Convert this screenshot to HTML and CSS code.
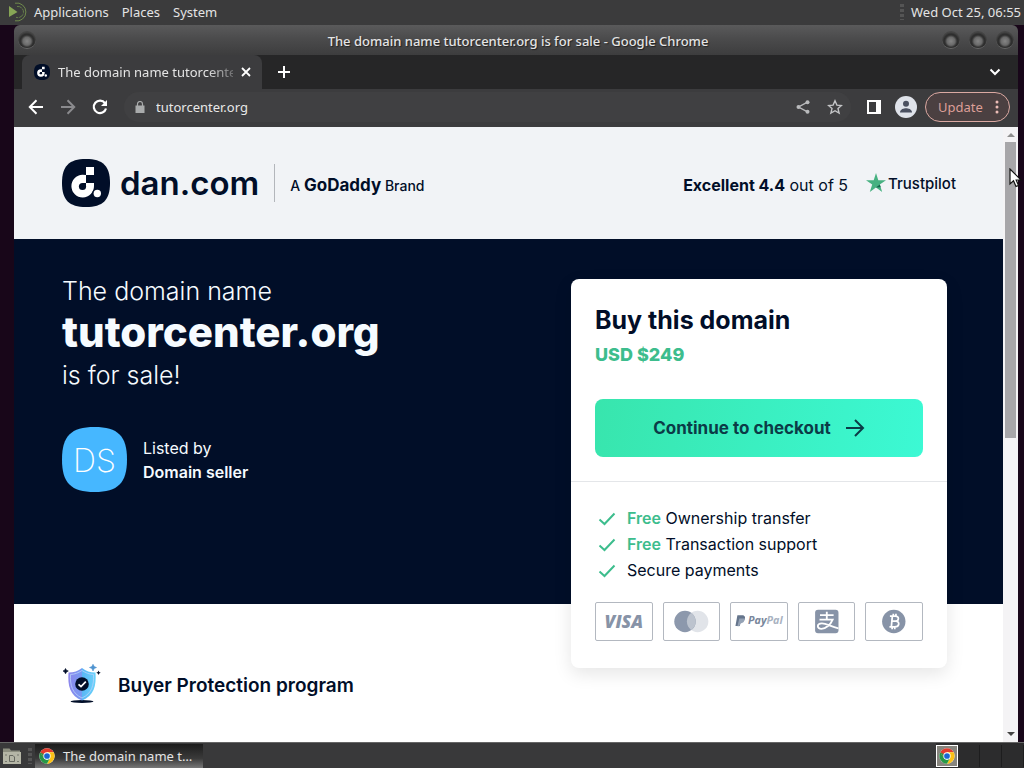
FILE: index.html
```
<!DOCTYPE html>
<html lang="en">
<head>
<meta charset="utf-8">
<title>The domain name tutorcenter.org is for sale</title>
<link rel="stylesheet" href="styles.css">
</head>
<body>
<svg class="defs" aria-hidden="true">
  <defs>
    <symbol id="chrome" viewBox="0 0 48 48">
      <circle cx="24" cy="24" r="23" fill="#fff"/>
      <path d="M24 24 4.1 12.5A23 23 0 0 1 43.9 12.5H24Z" fill="#e33b2e"/>
      <path d="M24 13H43.9A23 23 0 0 1 24 47L33.5 29.5Z" fill="#fbc116"/>
      <path d="M4.1 12.5 14.5 29.5 24 35 33.5 29.5 24 47A23 23 0 0 1 4.1 12.5Z" fill="#279847"/>
      <path d="M4.1 12.5 24 12.5 14.5 29.5Z" fill="#e33b2e"/>
      <path d="M4.1 12.5 14.5 29.5 24 24Z" fill="#279847"/>
      <circle cx="24" cy="24" r="11" fill="#fff"/>
      <circle cx="24" cy="24" r="8.6" fill="#1a66d2"/>
    </symbol>
    <symbol id="dan" viewBox="0 0 48 48">
      <path d="M24 0C41 0 48 7 48 24S41 48 24 48 0 41 0 24 7 0 24 0Z" fill="#010e28"/>
      <path d="M24 8h8v8h-8z" fill="#fff"/>
      <path d="M24 16V24H32V27A11.300 11.300 0 1 1 20.500 15.800Z" fill="#fff"/>
      <circle cx="20.500" cy="27.500" r="3.600" fill="#010e28"/>
      <path d="M20.500 23.900H24V27.500H20.500Z" fill="#010e28"/>
      <circle cx="35" cy="34.500" r="4.800" fill="#010e28"/>
      <circle cx="35.300" cy="34.500" r="3.700" fill="#fff"/>
    </symbol>
    <symbol id="check" viewBox="0 0 24 24">
      <path d="M4.500 13.500 9.500 18 19.500 7.500" fill="none" stroke="#3dbd8d" stroke-width="2"/>
    </symbol>
  </defs>
</svg>

<header class="panel">
  <svg class="mate" viewBox="0 0 22 22" aria-hidden="true">
    <path d="M3 5 11.500 11 3 16Z" fill="#87a556"/>
    <path d="M9 2.200A9 9 0 1 1 9 19.800" fill="none" stroke="#6f8a4c" stroke-width="1"/>
    <path d="M11 5.500A5.600 5.600 0 1 1 10 16.300" fill="none" stroke="#66804a" stroke-width="1" stroke-dasharray="5 1"/>
  </svg>
  <nav class="menus">
    <button>Applications</button>
    <button>Places</button>
    <button>System</button>
  </nav>
  <span class="grip"></span>
  <time class="clock">Wed Oct 25, 06:55</time>
</header>

<main class="desktop">
  <section class="window">
    <div class="titlebar">
      <button class="knob" aria-label="Window menu"></button>
      <span class="title">The domain name tutorcenter.org is for sale - Google Chrome</span>
      <div class="knobs">
        <button class="knob" aria-label="Minimize"></button>
        <button class="knob" aria-label="Maximize"></button>
        <button class="knob" aria-label="Close"></button>
      </div>
    </div>

    <div class="tabs">
      <div class="tab">
        <svg class="icon16" aria-hidden="true"><use href="#dan"/></svg>
        <span class="tab-title">The domain name tutorcenter</span>
        <button class="bare" aria-label="Close tab"><svg class="icon10" viewBox="0 0 10 10"><path d="M1 1 9 9M9 1 1 9" stroke="#fff" stroke-width="1.800"/></svg></button>
      </div>
      <button class="bare" aria-label="New tab"><svg class="icon12" viewBox="0 0 12 12"><path d="M6 0V12M0 6H12" stroke="#fff" stroke-width="2"/></svg></button>
      <button class="bare chevron" aria-label="Search tabs"><svg class="icon12" viewBox="0 0 12 12"><path d="M1.500 3.500 6 8 10.500 3.500" fill="none" stroke="#fff" stroke-width="2"/></svg></button>
    </div>

    <div class="toolbar">
      <button class="bare" aria-label="Back"><svg class="icon16" viewBox="0 0 16 16"><path d="M15 8H2M8.500 1.300 1.800 8 8.500 14.700" fill="none" stroke="#fff" stroke-width="2"/></svg></button>
      <button class="bare" aria-label="Forward"><svg class="icon16" viewBox="0 0 16 16"><path d="M1 8H14M7.500 1.300 14.200 8 7.500 14.700" fill="none" stroke="#8b8b8e" stroke-width="2"/></svg></button>
      <button class="bare" aria-label="Reload"><svg class="icon16" viewBox="0 0 16 16"><path d="M13 4.200A6.200 6.200 0 1 0 14 9.500" fill="none" stroke="#fff" stroke-width="2.200"/><path d="M15 1V7H9Z" fill="#fff"/></svg></button>
      <div class="omnibox">
        <svg class="icon12" viewBox="0 0 12 12" aria-hidden="true"><path d="M1.500 4.500h9v7.500h-9z" fill="#a9abac"/><path d="M3.500 5V3a2.500 2.500 0 0 1 5 0V5" fill="none" stroke="#a9abac" stroke-width="1.200"/></svg>
        <input class="url" aria-label="Address" value="tutorcenter.org">
        <button class="bare" aria-label="Share"><svg class="icon16" viewBox="0 0 16 16"><path d="M12.500 3.200 3.500 8 12.500 12.800" fill="none" stroke="#b9babc" stroke-width="1.400"/><g fill="#b9babc"><circle cx="12.500" cy="3.200" r="2"/><circle cx="3.500" cy="8" r="2"/><circle cx="12.500" cy="12.800" r="2"/></g></svg></button>
        <button class="bare" aria-label="Bookmark"><svg class="icon16" viewBox="0 0 16 16"><path d="M8 1.800 9.900 6.100 14.500 6.500 11 9.600 12.100 14.100 8 11.700 3.900 14.100 5 9.600 1.500 6.500 6.100 6.100Z" fill="none" stroke="#c3c4c6" stroke-width="1.400"/></svg></button>
      </div>
      <button class="bare" aria-label="Side panel"><svg class="icon14" viewBox="0 0 14 14"><path d="M0 0H14V14H0ZM2 2V12H9V2Z" fill="#fff" fill-rule="evenodd"/></svg></button>
      <button class="bare" aria-label="Profile"><svg class="icon22" viewBox="0 0 22 22"><circle cx="11" cy="11" r="11" fill="#dfe3ea"/><circle cx="11" cy="7.800" r="3" fill="#4a5060"/><path d="M5 16.500C5 13 9 12.200 11 12.200S17 13 17 16.500Z" fill="#4a5060"/></svg></button>
      <button class="update">Update
        <svg class="dots" viewBox="0 0 4 14" aria-hidden="true"><g fill="#ecbdb7"><circle cx="2" cy="2" r="1.500"/><circle cx="2" cy="7" r="1.500"/><circle cx="2" cy="12" r="1.500"/></g></svg>
      </button>
    </div>

    <div class="viewport">
      <article class="page">
        <header class="site-head">
          <a class="brand" href="#">
            <svg class="icon48" aria-hidden="true"><use href="#dan"/></svg>
            <span class="brand-name">dan.com</span>
          </a>
          <span class="rule"></span>
          <span class="owner">A <b>GoDaddy</b> Brand</span>
          <span class="rating"><b>Excellent 4.4</b> out of 5</span>
          <a class="trust" href="#"><svg class="icon20" viewBox="0 0 20 20" aria-hidden="true"><path d="M10 0 12.300 7.200H20L13.800 11.600 16.200 19 10 14.400 3.800 19 6.200 11.600 0 7.200H7.700Z" fill="#47b181"/><path d="M10 14.400 13.800 11.600 14.700 14.200Z" fill="#17644d"/></svg>Trustpilot</a>
        </header>

        <section class="hero">
          <div class="intro">
            <h1 class="headline">The domain name <strong>tutorcenter.org</strong> is for sale!</h1>
            <div class="seller">
              <svg class="avatar" viewBox="0 0 65 65" aria-hidden="true"><path d="M32.500 0C56 0 65 9 65 32.500S56 65 32.500 65 0 56 0 32.500 9 0 32.500 0Z" fill="#46b7ff"/><text x="32.500" y="45" class="initials">DS</text></svg>
              <p class="seller-text">Listed by<br><b>Domain seller</b></p>
            </div>
          </div>

          <aside class="card">
            <div class="offer">
              <h2 class="offer-title">Buy this domain</h2>
              <p class="price">USD $249</p>
              <button class="checkout">Continue to checkout
                <svg class="icon20" viewBox="0 0 20 20" aria-hidden="true"><path d="M1 10H18M10 2 18 10 10 18" fill="none" stroke="#0b3b47" stroke-width="2"/></svg>
              </button>
            </div>
            <div class="perks">
              <ul class="perk-list">
                <li><svg class="icon24" aria-hidden="true"><use href="#check"/></svg><span><b>Free</b> Ownership transfer</span></li>
                <li><svg class="icon24" aria-hidden="true"><use href="#check"/></svg><span><b>Free</b> Transaction support</span></li>
                <li><svg class="icon24" aria-hidden="true"><use href="#check"/></svg><span>Secure payments</span></li>
              </ul>
              <div class="payments">
                <svg class="pay" viewBox="0 0 56 38" role="img" aria-label="Visa"><text x="28" y="26" class="visa">VISA</text></svg>
                <svg class="pay" viewBox="0 0 56 38" role="img" aria-label="Mastercard"><circle cx="34" cy="19" r="11" fill="#e1e4e9"/><circle cx="21" cy="19" r="11" fill="#8c98ac"/><path d="M27.500 10.100A11 11 0 0 1 27.500 27.900 11 11 0 0 1 27.500 10.100Z" fill="#bcc3ce"/></svg>
                <svg class="pay" viewBox="0 0 56 38" role="img" aria-label="PayPal"><path d="M6 12.500H11C14 12.500 14.500 15 13.200 17.500 12.500 19 11 19.500 9.500 19.500L8.500 23.500H4Z" fill="#65758c"/><path d="M8 16H13.500C13.500 19.500 11.500 21 9 21L8 24H6Z" fill="#94a2b5"/><text x="17" y="22" class="paypal">Pay<tspan class="pal">Pal</tspan></text></svg>
                <svg class="pay" viewBox="0 0 56 38" role="img" aria-label="Alipay"><rect x="16" y="7" width="24" height="24" rx="3" fill="#8793a7"/><path d="M21 12.500H35M28 9V17M20.500 17H34C32 22 27 26.500 22.500 26.500 17.500 26.500 17.500 21 23 21 28 21 32 24.500 40 26" fill="none" stroke="#fff" stroke-width="1.900"/></svg>
                <svg class="pay" viewBox="0 0 56 38" role="img" aria-label="Bitcoin"><circle cx="28" cy="19" r="12" fill="#8793a7"/><path d="M24 13.500H29.500C34 13.500 33.500 18.700 29.500 18.700H26 30C34.500 18.700 34 24.500 29 24.500H23.500M26.500 13.500 25.500 24.500M27.500 11V13.500M30.200 11V13.500M26.300 24.500V27M29 24.500V27" fill="none" stroke="#fff" stroke-width="1.800"/></svg>
              </div>
            </div>
          </aside>
        </section>

        <section class="protection">
          <svg class="shield" viewBox="0 0 40 40" aria-hidden="true">
            <defs><linearGradient id="shade" x1="0" y1="0" x2="1" y2="0"><stop offset="0" stop-color="#8d86ec"/><stop offset=".5" stop-color="#779bf2"/><stop offset=".5" stop-color="#59b7f5"/><stop offset="1" stop-color="#6bd3fa"/></linearGradient></defs>
            <ellipse cx="20" cy="37.500" rx="11.500" ry="1.500" fill="#010e28"/>
            <path d="M20 4C24 7 28 8.500 33.500 8.500 34.500 22 32 31.500 20 36.500 8 31.500 5.500 22 6.500 8.500 12 8.500 16 7 20 4Z" fill="url(#shade)"/>
            <path d="M20 6.500C24 9 27 10.200 31.500 10.500 32 21 30 29.500 20 34 10 29.500 8 21 8.500 10.500 13 10.200 16 9 20 6.500Z" fill="none" stroke="#b9d3fb" stroke-width=".8"/>
            <circle cx="20" cy="20" r="6.800" fill="#010e28"/>
            <path d="M16.500 20.300 19 22.500 23.800 17.700" fill="none" stroke="#fff" stroke-width="1.700"/>
            <path d="M3.500 4.500 4.500 6.300 6.300 7 4.500 7.900 3.500 9.800 2.600 7.900 1 7 2.600 6.300Z" fill="#010e28" stroke="#010e28" stroke-width=".6"/>
            <path d="M31 .3 32.200 2.600 34.500 3.500 32.200 4.500 31 7 29.900 4.500 27.500 3.500 29.900 2.600Z" fill="#4f94d0" stroke="#4f94d0" stroke-width=".6"/>
            <path d="M36.500 6.500 37.200 8 38.700 8.700 37.200 9.400 36.500 11 35.800 9.400 34.300 8.700 35.800 8Z" fill="#010e28"/>
          </svg>
          <h3 class="protection-title">Buyer Protection program</h3>
        </section>
      </article>
      <div class="scrollbar"><span class="up"></span><span class="thumb"></span><span class="down"></span></div>
    </div>
  </section>
</main>

<footer class="taskbar">
  <button class="bare files" aria-label="Files"><svg class="icon20" viewBox="0 0 20 20"><path d="M1 4V2.500H7.500L9 4.500H18V7H1Z" fill="#8d8f80"/><path d="M1 6H19V18H1Z" fill="#b5b6a6"/><path d="M7.500 9.500H11L12.500 11V15.500H7.500Z" fill="none" stroke="#66685f"/><path d="M3 9H5M15 9H17M3 15.500H5M15 15.500H17" stroke="#77796f"/></svg></button>
  <span class="grip"></span>
  <button class="task"><svg class="icon16" aria-hidden="true"><use href="#chrome"/></svg>The domain name t…</button>
  <div class="workspaces">
    <button class="space current" aria-label="Workspace 1"><svg class="icon16" aria-hidden="true"><use href="#chrome"/></svg></button>
    <button class="space" aria-label="Workspace 2"></button>
    <button class="space" aria-label="Workspace 3"></button>
    <button class="space" aria-label="Workspace 4"></button>
  </div>
</footer>

<svg class="cursor" viewBox="0 0 14 20" aria-hidden="true"><path d="M1 1V16L4.500 12.800 7 18.500 9.500 17.500 7.200 12H12Z" fill="#fff" stroke="#111" stroke-width="1.200"/></svg>
</body>
</html>
```

FILE: styles.css
```
* { box-sizing: border-box; }
body {
  margin: 0;
  height: 100vh;
  display: flex;
  flex-direction: column;
  overflow: hidden;
  background: #180619;
  font-family: "Noto Sans", sans-serif;
  font-size: 13px;
  color: #e4e4e4;
}
h1, h2, h3, p, ul { margin: 0; padding: 0; }
ul { list-style: none; }
button { font: inherit; color: inherit; border: 0; padding: 0; background: none; }
a { color: inherit; text-decoration: none; }
svg { display: block; flex: none; }
.defs { position: absolute; width: 0; height: 0; }
.bare { display: flex; align-items: center; justify-content: center; }
.icon10 { width: 10px; height: 10px; }
.icon12 { width: 12px; height: 12px; }
.icon14 { width: 14px; height: 14px; }
.icon16 { width: 16px; height: 16px; }
.icon20 { width: 20px; height: 20px; }
.icon22 { width: 22px; height: 22px; }
.icon24 { width: 24px; height: 24px; }
.icon48 { width: 48px; height: 48px; }

.panel { display: flex; align-items: center; flex: none; height: 25px; padding: 0 3px 2px 6px; background: #3b3b3c; }
.mate { width: 22px; height: 22px; margin-right: 6px; }
.menus { display: flex; gap: 13px; }
.grip { width: 4px; height: 16px; background: repeating-linear-gradient(#555 0 3px, #3b3b3c 3px 5px); }
.panel .grip { margin-left: auto; }
.clock { margin-left: 7px; }

.desktop { flex: 1; min-height: 0; padding: 0 6px 0 14px; display: flex; }
.window { flex: 1; min-width: 0; display: flex; flex-direction: column; border-radius: 6px 6px 0 0; overflow: hidden; }
.titlebar { display: flex; align-items: center; justify-content: space-between; flex: none; height: 30px; padding: 0 4px; background: linear-gradient(#5a5a5b, #4b4b4c 45%, #3d3d3e); }
.title { font-weight: 500; margin-left: 58px; padding-top: 2px; text-shadow: 1px 1px 1px #222; }
.knobs { display: flex; gap: 9px; }
.knob { width: 18px; height: 18px; border-radius: 50%; background: radial-gradient(circle at 50% 60%, #858585, #6a6a6a 4px, #333 6px, #2c2c2c 7px, #444 9px); border-bottom: 1px solid #666; }

.tabs { display: flex; align-items: center; flex: none; height: 34px; padding-right: 17px; background: #262627; }
.tab { display: flex; align-items: center; gap: 8px; width: 240px; height: 34px; margin: 0 16px 0 8px; padding: 0 11px 0 12px; border-radius: 8px 8px 0 0; background: #3c3c3e; }
.tab-title { flex: 1; min-width: 0; white-space: nowrap; -webkit-mask-image: linear-gradient(90deg, #000 85%, rgba(0, 0, 0, .3)); mask-image: linear-gradient(90deg, #000 85%, rgba(0, 0, 0, .3)); }
.chevron { margin-left: auto; }
.toolbar { display: flex; align-items: center; gap: 16px; flex: none; height: 38px; padding: 0 8px 2px 14px; background: #3c3c3e; }
.omnibox { display: flex; align-items: center; flex: 1; gap: 16px; height: 30px; padding: 0 8px 0 10px; border-radius: 15px; background: #404042; }
.url { flex: 1; min-width: 0; border: 0; padding: 0; margin-left: -6px; background: none; font: inherit; color: #e8e8e8; }
.update { display: flex; align-items: center; gap: 12px; height: 30px; width: 85px; padding: 0 12px; margin-left: -8px; border: 1px solid #dba9a2; border-radius: 15px; background: #4b4041; color: #dd9f98; }
.toolbar > .bare:nth-last-child(2) { margin-left: -2px; }
.dots { width: 4px; height: 14px; }

.viewport { flex: 1; min-height: 0; display: flex; background: #fff; }
.page { flex: 1; min-width: 0; overflow: hidden; font-family: Inter, sans-serif; font-size: 16px; color: #010e28; }
.scrollbar { display: flex; flex-direction: column; align-items: center; width: 15px; padding: 6px 0; background: #f4f3f5; }
.thumb { width: 11px; height: 296px; margin-top: 5px; background: #a7a6a9; }
.up, .down { border: 4px solid transparent; }
.up { border-top: 0; border-bottom-color: #8e8e8e; }
.down { border-bottom: 0; border-top-color: #444; margin-top: auto; }

.site-head { display: flex; align-items: center; height: 112px; padding: 0 47px 0 48px; background: #f1f3f6; }
.brand { display: flex; align-items: center; gap: 10px; }
.brand-name { font-size: 33px; font-weight: 600; line-height: 40px; }
.rule { width: 1px; height: 38px; margin: 0 15px; background: #b3b6bb; }
.owner { font-size: 14px; font-weight: 500; padding-top: 4px; }
.owner b { font-size: 17px; font-weight: 700; }
.rating { margin-left: auto; padding-top: 3px; font-size: 16px; }
.rating b { font-weight: 700; }
.trust { display: flex; align-items: center; gap: 2px; margin-left: 18px; font-size: 15px; font-weight: 500; }

.hero { display: flex; justify-content: space-between; align-items: flex-start; padding: 40px 56px 0 48px; background: #010e28; color: #f6fbff; }
.headline { margin-top: -9px; font-size: 25px; font-weight: 300; line-height: 42px; }
.headline strong { display: block; font-size: 42px; font-weight: 800; line-height: 40px; padding-bottom: 2px; }
.seller { display: flex; align-items: center; gap: 16px; margin-top: 31px; }
.avatar { width: 65px; height: 65px; }
.initials { font: 200 32px Inter, sans-serif; fill: #fff; text-anchor: middle; }
.seller-text { line-height: 24px; }
.seller-text b { font-weight: 600; }

.card { width: 376px; margin-bottom: -64px; border-radius: 8px; background: #fff; color: #010e28; box-shadow: 0 6px 18px rgba(0, 0, 0, .1); position: relative; }
.offer { padding: 24px; border-bottom: 1px solid #e4e6e9; }
.offer-title { font-size: 25px; font-weight: 700; line-height: 34px; }
.price { font-size: 18px; font-weight: 800; line-height: 24px; margin-top: 6px; color: #3dbd8d; }
.checkout { display: flex; align-items: center; justify-content: center; gap: 14px; width: 100%; height: 58px; margin-top: 32px; border-radius: 8px; background: linear-gradient(100deg, #38e5ad, #3cf9d4); font-size: 17px; font-weight: 700; color: #0b3b47; }
.perks { padding: 23px 24px 27px; }
.perk-list li { display: flex; align-items: center; gap: 8px; line-height: 26px; }
.perk-list b { font-weight: 600; color: #3dbd8d; }
.payments { display: grid; grid-template-columns: repeat(5, 1fr); gap: 10px; margin-top: 19px; }
.pay { width: 100%; height: 39px; border: 1px solid #b3b8c0; border-radius: 2px; }
.visa { font: italic 800 18px "Open Sans", sans-serif; fill: #8793a7; text-anchor: middle; }
.paypal { font: italic 700 11px "Open Sans", sans-serif; fill: #78869b; }
.pal { fill: #a8b2c1; }

.protection { display: flex; align-items: center; gap: 16px; padding: 60px 48px; }
.shield { width: 40px; height: 40px; }
.protection-title { padding-top: 3px; font-size: 19px; font-weight: 600; line-height: 24px; }

.taskbar { display: flex; align-items: center; flex: none; height: 26px; padding: 0 0 0 2px; border-top: 1px solid #666; background: #39393a; }
.files { margin-right: 6px; }
.task { display: flex; align-items: center; gap: 8px; width: 168px; height: 24px; margin-left: 3px; padding: 0 4px; background: linear-gradient(#1c1c1c, #3a3a3a 60%, #777); }
.workspaces { display: grid; grid-template-columns: repeat(4, 22px); align-items: center; margin-left: auto; height: 25px; background: #2c2c2d; }
.space { height: 22px; border-right: 1px solid #1d1d1e; }
.current { display: flex; align-items: center; justify-content: center; border: 1px solid #fff; background: #87857e; }

.cursor { position: absolute; left: 1009px; top: 168px; width: 14px; height: 20px; }
```
